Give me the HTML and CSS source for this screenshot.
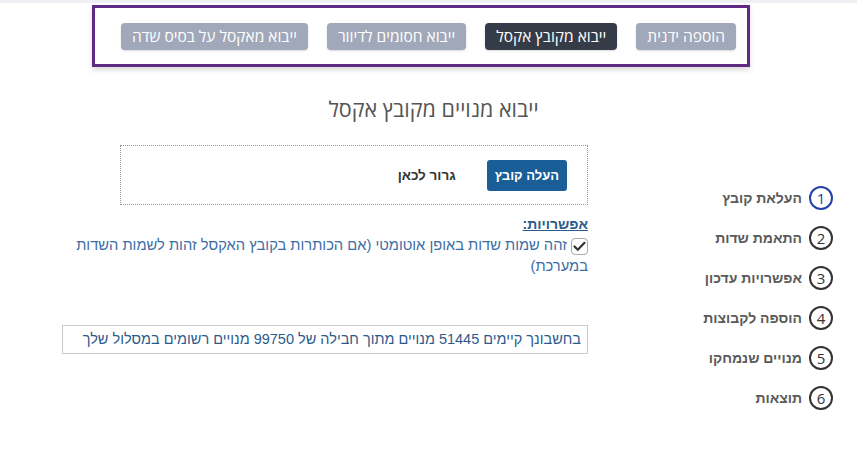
FILE: index.html
```html
<!DOCTYPE html>
<html lang="he" dir="rtl">
<head>
    <meta charset="UTF-8">
    <meta name="viewport" content="width=device-width, initial-scale=1.0">
    <title>ייבוא מנויים</title>
    <link rel="stylesheet" href="styles.css">
</head>
<body>
    <div class="topbar">
        <div class="tabs">
            <button class="tab">הוספה ידנית</button>
            <button class="tab active">ייבוא מקובץ אקסל</button>
            <button class="tab">ייבוא חסומים לדיוור</button>
            <button class="tab">ייבוא מאקסל על בסיס שדה</button>
        </div>
    </div>

    <h2 class="title">ייבוא מנויים מקובץ אקסל</h2>

    <div class="page">
        <ul class="steps">
            <li class="step current"><span class="num">1</span>העלאת קובץ</li>
            <li class="step"><span class="num">2</span>התאמת שדות</li>
            <li class="step"><span class="num">3</span>אפשרויות עדכון</li>
            <li class="step"><span class="num">4</span>הוספה לקבוצות</li>
            <li class="step"><span class="num">5</span>מנויים שנמחקו</li>
            <li class="step"><span class="num">6</span>תוצאות</li>
        </ul>

        <div class="content">
            <div class="dropzone">
                <button class="upload-button">העלה קובץ</button>
                <span class="drop-text">גרור לכאן</span>
            </div>

            <div class="options">
                <div class="options-title">אפשרויות:</div>
                <label class="option">
                    <span class="checkbox">
                        <svg width="13" height="11" viewBox="0 0 13 11"><path d="M1.5 5.5 L4.8 8.8 L11.5 1.8" fill="none" stroke="#333" stroke-width="2.2" stroke-linecap="round" stroke-linejoin="round"/></svg>
                    </span>
                    זהה שמות שדות באופן אוטומטי (אם הכותרות בקובץ האקסל זהות לשמות השדות במערכת)
                </label>
            </div>

            <div class="quota">בחשבונך קיימים 51445 מנויים מתוך חבילה של 99750 מנויים רשומים במסלול שלך</div>
        </div>
    </div>
</body>
</html>
```

FILE: styles.css
```css
body {
    margin: 0;
    font-family: "Liberation Sans", Arial, sans-serif;
    background-color: white;
    color: #333;
    border-top: 3px solid #eef0f3;
}
.topbar {
    width: 652px;
    height: 56px;
    margin: 2px 107px 0 0;
    border: 3px solid #5e2a84;
    box-shadow: 0 3px 5px rgba(0,0,0,0.15);
    display: flex;
    align-items: center;
}
.tabs {
    display: flex;
    gap: 19px;
    margin-right: 11px;
}
.tab {
    font-family: "Open Sans", sans-serif;
    font-size: 15.5px;
    color: white;
    background-color: #a0a8b9;
    border: none;
    border-radius: 4px;
    height: 27px;
    padding: 0 11px;
    box-shadow: 0 1px 2px rgba(0,0,0,0.15);
}
.tab.active {
    background-color: #363b48;
}
.title {
    font-family: "Open Sans", sans-serif;
    font-size: 21.5px;
    font-weight: normal;
    color: #555;
    text-align: center;
    margin: 27px 0 22px 10px;
}
.page {
    display: flex;
    align-items: flex-start;
}
.steps {
    list-style: none;
    margin: 41px 24px 0 0;
    padding: 0;
    width: 148px;
}
.step {
    display: flex;
    align-items: center;
    gap: 7px;
    height: 24px;
    margin-bottom: 16px;
    font-size: 14px;
    font-weight: bold;
    color: #5a5a5a;
}
.num {
    width: 20px;
    height: 20px;
    border: 2px solid #333;
    border-radius: 50%;
    display: flex;
    align-items: center;
    justify-content: center;
    font-family: "Open Sans", sans-serif;
    font-size: 15px;
    font-weight: normal;
    color: #333;
}
.step.current .num {
    border-color: #2441a8;
    color: #2441a8;
}
.content {
    width: 526px;
    margin-right: 97px;
}
.dropzone {
    width: 446px;
    height: 58px;
    border: 1px dotted #999;
    display: flex;
    align-items: center;
    gap: 31px;
    padding-right: 20px;
}
.upload-button {
    font-family: "Liberation Sans", Arial, sans-serif;
    font-size: 13px;
    font-weight: bold;
    color: white;
    background-color: #195e97;
    border: none;
    border-radius: 3px;
    height: 31px;
    padding: 0 8px;
}
.drop-text {
    font-size: 13.5px;
    font-weight: bold;
    color: #333;
}
.options {
    margin-top: 11px;
    color: #3b6ea5;
    font-size: 14.7px;
}
.options-title {
    font-weight: bold;
    text-decoration: underline;
    color: #2b5b8c;
    font-size: 14px;
    margin-bottom: 3px;
}
.option {
    display: block;
    line-height: 21px;
    padding-left: 8px;
}
.checkbox {
    display: inline-flex;
    align-items: center;
    justify-content: center;
    width: 15px;
    height: 15px;
    border: 1px solid #aaa;
    border-radius: 4px;
    vertical-align: -2px;
}
.quota {
    margin-top: 48px;
    border: 1px solid #ccc;
    padding: 5px 6px;
    font-size: 14.5px;
    color: #2b5b8c;
    line-height: 17px;
}
```
